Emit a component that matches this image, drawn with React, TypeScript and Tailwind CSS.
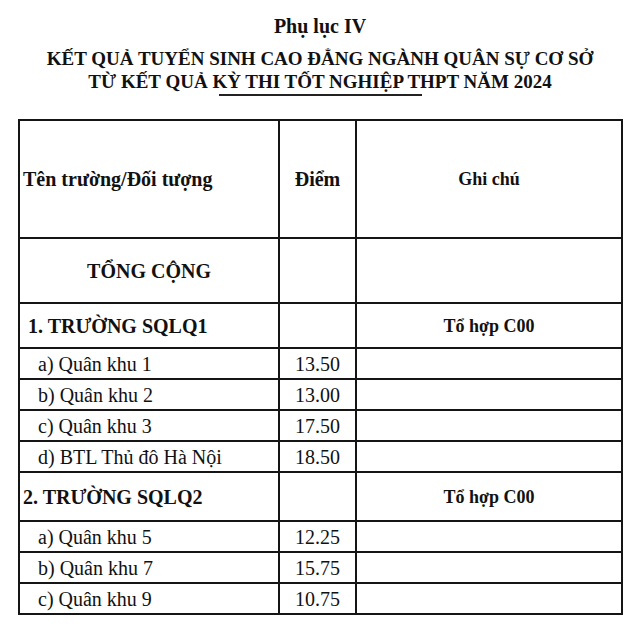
const serif = "font-['Liberation_Serif','Times_New_Roman',serif]";

type Row = {
  label: string;
  score?: string;
  note?: string;
  kind: "group" | "item";
  height: string;
  indent: string;
};

const rows: Row[] = [
  { label: "1. TRƯỜNG SQLQ1", note: "Tổ hợp C00", kind: "group", height: "h-[45px]", indent: "pl-[8px]" },
  { label: "a) Quân khu 1", score: "13.50", kind: "item", height: "h-[31px]", indent: "pl-[18px]" },
  { label: "b) Quân khu 2", score: "13.00", kind: "item", height: "h-[31px]", indent: "pl-[18px]" },
  { label: "c) Quân khu 3", score: "17.50", kind: "item", height: "h-[31px]", indent: "pl-[18px]" },
  { label: "d) BTL Thủ đô Hà Nội", score: "18.50", kind: "item", height: "h-[31px]", indent: "pl-[18px]" },
  { label: "2. TRƯỜNG SQLQ2", note: "Tổ hợp C00", kind: "group", height: "h-[49px]", indent: "pl-[3px]" },
  { label: "a) Quân khu 5", score: "12.25", kind: "item", height: "h-[31px]", indent: "pl-[18px]" },
  { label: "b) Quân khu 7", score: "15.75", kind: "item", height: "h-[31px]", indent: "pl-[18px]" },
  { label: "c) Quân khu 9", score: "10.75", kind: "item", height: "h-[31px]", indent: "pl-[18px]" },
];

const cell = "border-2 border-[#151515] p-0 align-middle leading-[22px]";

export default function App() {
  return (
    <div className={`${serif} w-[640px] h-[630px] bg-white text-[#111] pt-[13px]`}>
      <header className="flex flex-col items-center">
        <h1 className="text-[20px] leading-[26px] font-bold">Phụ lục IV</h1>
        <h2 className="mt-[8px] text-[19px] leading-[23px] font-bold text-center">
          KẾT QUẢ TUYỂN SINH CAO ĐẲNG NGÀNH QUÂN SỰ CƠ SỞ
          <br />
          TỪ KẾT QUẢ KỲ THI TỐT NGHIỆP THPT NĂM 2024
        </h2>
        <div className="mt-[1px] h-[2px] w-[203px] bg-[#222]" />
      </header>

      <table className="mt-[23px] ml-[18px] w-[603px] border-collapse table-fixed">
        <colgroup>
          <col className="w-[260px]" />
          <col className="w-[77px]" />
          <col className="w-[266px]" />
        </colgroup>
        <tbody>
          <tr className="h-[118px]">
            <td className={`${cell} pl-[3px] text-[20px] font-bold`}>Tên trường/Đối tượng</td>
            <td className={`${cell} text-center text-[20px] font-bold`}>Điểm</td>
            <td className={`${cell} text-center text-[18px] font-bold`}>Ghi chú</td>
          </tr>
          <tr className="h-[65px]">
            <td className={`${cell} text-center text-[20px] font-bold`}>TỔNG CỘNG</td>
            <td className={cell} />
            <td className={cell} />
          </tr>
          {rows.map((row) => (
            <tr key={row.label + row.kind} className={row.height}>
              <td
                className={`${cell} ${row.indent} text-[20px] ${
                  row.kind === "group" ? "font-bold" : ""
                }`}
              >
                {row.label}
              </td>
              <td className={`${cell} text-center text-[20px]`}>{row.score}</td>
              <td className={`${cell} text-center text-[18px] font-bold`}>{row.note}</td>
            </tr>
          ))}
        </tbody>
      </table>
    </div>
  );
}
